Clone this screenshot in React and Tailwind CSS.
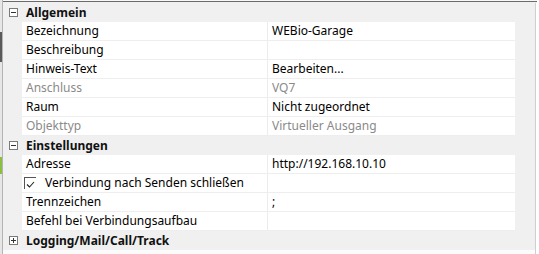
const sections = [
  {
    title: "Allgemein",
    open: true,
    rows: [
      { name: "Bezeichnung", value: "WEBio-Garage" },
      { name: "Beschreibung", value: "" },
      { name: "Hinweis-Text", value: "Bearbeiten..." },
      { name: "Anschluss", value: "VQ7", disabled: true },
      { name: "Raum", value: "Nicht zugeordnet" },
      { name: "Objekttyp", value: "Virtueller Ausgang", disabled: true },
    ],
  },
  {
    title: "Einstellungen",
    open: true,
    rows: [
      { name: "Adresse", value: "http://192.168.10.10" },
      { name: "Verbindung nach Senden schließen", value: "", check: true },
      { name: "Trennzeichen", value: ";" },
      { name: "Befehl bei Verbindungsaufbau", value: "" },
    ],
  },
  { title: "Logging/Mail/Call/Track", open: false, rows: [] },
];

function ToggleBox({ open }) {
  return (
    <div className="w-[9px] h-[9px] border border-[#7a7a7a] bg-white relative flex items-center justify-center">
      <div className="w-[5px] h-px bg-[#333]" />
      {!open && <div className="absolute w-px h-[5px] bg-[#333]" />}
    </div>
  );
}

function Category({ title, open }) {
  return (
    <div className="h-[19px] flex items-center">
      <div className="w-[19px] flex justify-center pl-[1px]">
        <ToggleBox open={open} />
      </div>
      <span className="pl-[4px] font-bold text-[#111]">{title}</span>
    </div>
  );
}

function Row({ name, value, disabled, check }) {
  const color = disabled ? "text-[#8a8a8a]" : "text-black";
  return (
    <div className="h-[19px] flex">
      <div className="w-[19px]" />
      <div className="w-[493px] flex bg-white border-b border-[#eeeeee]">
        <div className={`w-[246px] flex items-center border-r border-[#ececec] ${color}`}>
          {check ? (
            <>
              <div className="ml-[2px] w-[12px] h-[12px] border-l border-t border-[#555] flex items-center justify-center">
                <svg width="9" height="7" viewBox="0 0 9 7" className="mt-[1px]">
                  <path d="M1 3.5 L3.5 6 L8 1" fill="none" stroke="#222" strokeWidth="1.1" />
                </svg>
              </div>
              <span className="pl-[9px]">{name}</span>
            </>
          ) : (
            <span className="pl-[4px]">{name}</span>
          )}
        </div>
        <div className={`flex-1 flex items-center pl-[4px] ${color}`}>{value}</div>
      </div>
    </div>
  );
}

export default function App() {
  return (
    <div
      className="w-[539px] h-[254px] bg-[#f0f0f0] flex overflow-hidden text-[12px] leading-none"
      style={{ fontFamily: '"Noto Sans", "Open Sans", sans-serif' }}
    >
      {/* left edge of window behind */}
      <div className="w-[3px] flex flex-col border-r border-[#b4b4b4] bg-[#e6e6e6]">
        <div className="h-[32px]" />
        <div className="h-[30px] bg-[#5a5a5a]" />
        <div className="h-[95px]" />
        <div className="h-[17px] bg-[#8bbf3f]" />
        <div className="flex-1" />
      </div>

      <div className="w-[534px] flex flex-col">
        <div className="h-[1px] bg-[#f7f7f7]" />
        <div className="h-[1px] bg-[#6b6b6b]" />
        <div className="h-[1px]" />
        <div className="flex-1 flex">
          <div className="w-[532px] flex flex-col">
            {sections.map((s) => (
              <div key={s.title}>
                <Category title={s.title} open={s.open} />
                {s.rows.map((r) => (
                  <Row key={r.name} {...r} />
                ))}
              </div>
            ))}
            <div className="flex-1 bg-[#fbfbfb]" />
          </div>
          <div className="w-px bg-[#cfcfcf]" />
          <div className="flex-1 bg-white" />
        </div>
      </div>
      <div className="flex-1 bg-white" />
    </div>
  );
}
